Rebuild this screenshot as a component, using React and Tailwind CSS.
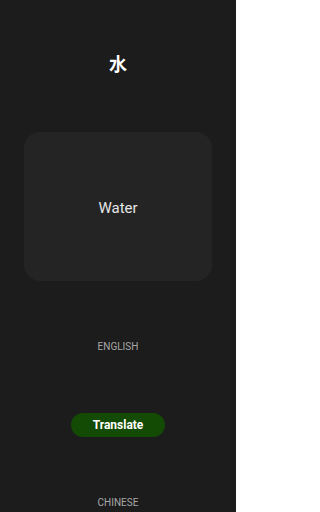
import React from "react";

const App = () => {
  return (
    <div
      className="w-[236px] h-[512px] bg-[#1c1c1c] flex flex-col items-center overflow-hidden"
      style={{ fontFamily: "Roboto, 'Noto Sans CJK SC', sans-serif" }}
    >
      <div className="mt-[53px] h-6 leading-6 text-[18px] font-bold text-white">水</div>
      <div className="mt-[55px] w-[188px] h-[149px] rounded-2xl bg-[#242424] flex items-center justify-center">
        <span className="mt-[3px] text-[15px] text-[#e6e6e6]">Water</span>
      </div>
      <div className="mt-[58px] h-4 leading-4 text-[10px] text-[#a8a8a8]">ENGLISH</div>
      <button className="mt-[58px] w-[94px] h-6 rounded-full bg-[#134a04] text-white text-[12px] font-bold">
        Translate
      </button>
      <div className="mt-[58px] h-4 leading-4 text-[10px] text-[#a8a8a8]">CHINESE</div>
    </div>
  );
};

export default App;
